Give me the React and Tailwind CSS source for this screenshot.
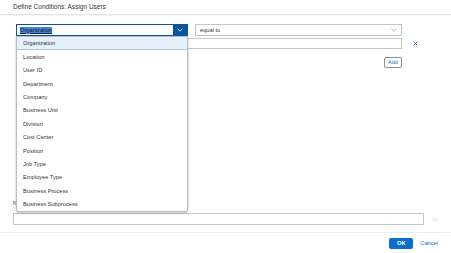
import React from "react";

const options = [
  "Organization",
  "Location",
  "User ID",
  "Department",
  "Company",
  "Business Unit",
  "Division",
  "Cost Center",
  "Position",
  "Job Type",
  "Employee Type",
  "Business Process",
  "Business Subprocess",
];

function Chevron({ color = "#ffffff" }) {
  return (
    <svg width="6" height="4" viewBox="0 0 6 4" fill="none">
      <polyline points="0.5,0.8 3,3.2 5.5,0.8" stroke={color} strokeWidth="0.8" />
    </svg>
  );
}

function Cross({ color, size = 5, width = 1 }) {
  return (
    <svg width={size} height={size} viewBox="0 0 6 6" fill="none">
      <line x1="0.8" y1="0.8" x2="5.2" y2="5.2" stroke={color} strokeWidth={width} />
      <line x1="5.2" y1="0.8" x2="0.8" y2="5.2" stroke={color} strokeWidth={width} />
    </svg>
  );
}

export default function App() {
  return (
    <div
      className="relative w-[451px] h-[253px] bg-white flex flex-col text-[#32363a] overflow-hidden"
      style={{ fontFamily: '"Liberation Sans", Arial, sans-serif' }}
    >
      {/* header */}
      <div className="h-[15px] shrink-0 flex items-center pl-[13px] text-[6.5px] border-b border-[#e4e4e4] shadow-[0_1px_1px_rgba(0,0,0,0.04)]">
        Define Conditions: Assign Users
      </div>

      {/* body */}
      <div className="flex-1 flex flex-col px-[13px] pt-[9px]">
        <div className="flex items-center ml-[3px]">
          <div className="w-[172px] h-[12px] flex items-center border border-[#0854a0] bg-white">
            <div className="flex-1 pl-[3px] flex items-center">
              <span className="text-[5.7px] leading-[7px] bg-[#4a84d4] text-[#0e2140] underline">
                Organization
              </span>
            </div>
            <div className="w-[14px] h-full bg-[#0854a0] flex items-center justify-center">
              <Chevron />
            </div>
          </div>
          <div className="ml-[7px] w-[207px] h-[12px] flex items-center justify-between border border-[#c2c6ca] px-[4px]">
            <span className="text-[5.7px]">equal to</span>
            <Chevron color="#a0a6ad" />
          </div>
        </div>

        <div className="flex items-center ml-[3px] mt-[2px]">
          <div className="w-[386px] h-[11px] border border-[#c2c6ca] bg-white" />
          <div className="ml-[11px] flex items-center">
            <Cross color="#0a6ed1" />
          </div>
        </div>

        <div className="flex ml-[3px] w-[386px] justify-end mt-[8px]">
          <div className="w-[18px] h-[11px] border border-[#89919a] rounded-[2px] flex items-center justify-center text-[5.5px] text-[#0a6ed1]">
            Add
          </div>
        </div>

        <div className="mt-[131px] h-[8px] flex items-center text-[5.7px]">Name</div>
        <div className="mt-[6px] flex items-center">
          <div className="w-[411px] h-[12px] border border-[#c2c6ca] bg-white" />
          <div className="ml-[8px] flex items-center">
            <Cross color="#c4c8cc" width={0.8} />
          </div>
        </div>
      </div>

      {/* footer */}
      <div className="h-[21px] shrink-0 flex items-center justify-end pr-[13px] border-t border-[#ececec]">
        <div className="w-[24px] h-[11px] rounded-[2px] bg-[#0a6ed1] text-white font-bold text-[5.7px] flex items-center justify-center">
          OK
        </div>
        <div className="ml-[7px] text-[5.7px] text-[#0a6ed1]">Cancel</div>
      </div>

      {/* open dropdown list */}
      <div className="absolute left-[16px] top-[36px] w-[172px] bg-white border border-[#b9bec3] rounded-b-[2px] shadow-[0_1px_3px_rgba(0,0,0,0.25)] flex flex-col">
        {options.map((opt, i) => (
          <div
            key={opt}
            className={`h-[13.4px] flex items-center pl-[6px] text-[5.7px] ${
              i === 0 ? "bg-[#e5f0fa] border-b border-[#a9c8e8]" : ""
            }`}
          >
            {opt}
          </div>
        ))}
      </div>
    </div>
  );
}
